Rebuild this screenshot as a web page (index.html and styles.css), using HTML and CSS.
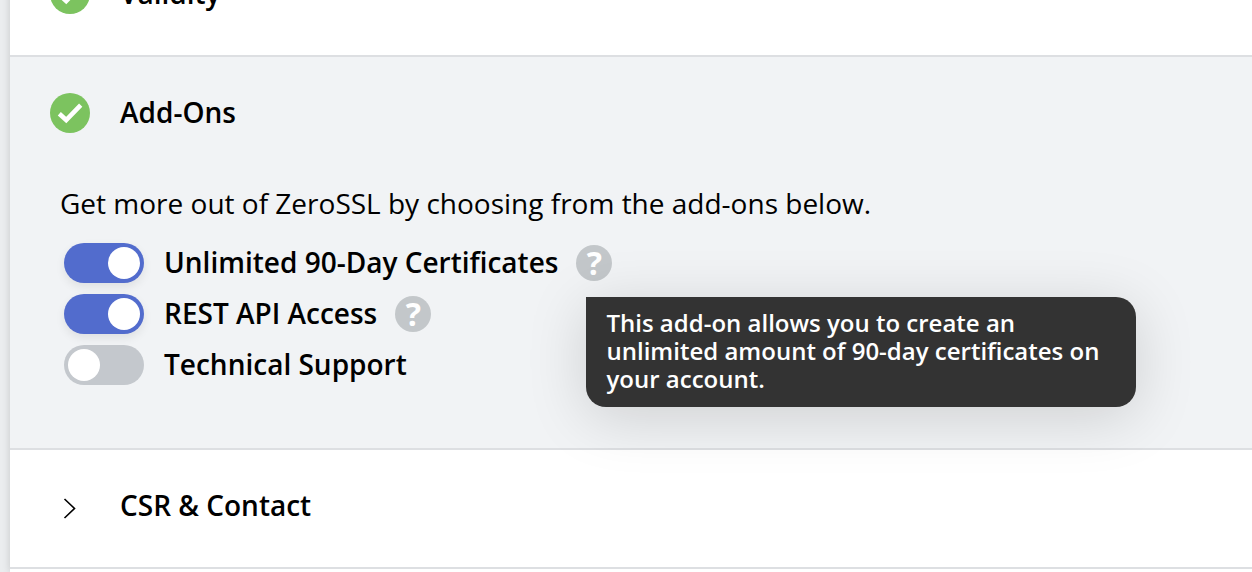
FILE: index.html
```html
<!DOCTYPE html>
<html lang="en">
<head>
  <meta charset="UTF-8">
  <title>New Certificate - ZeroSSL</title>
  <link rel="stylesheet" href="styles.css">
</head>
<body>

  <main class="steps">
    <section class="step">
      <button class="step-header" type="button">
        <svg class="step-icon" viewBox="0 0 40 40" aria-hidden="true">
          <circle cx="20" cy="20" r="20" fill="#7cc35f"/>
          <path d="M9.3 20.8L16.2 27L30.7 12.2" fill="none" stroke="#fff" stroke-width="4.6"/>
        </svg>
        <span>Validity</span>
      </button>
    </section>

    <section class="step active">
      <button class="step-header" type="button" aria-expanded="true">
        <svg class="step-icon" viewBox="0 0 40 40" aria-hidden="true">
          <circle cx="20" cy="20" r="20" fill="#7cc35f"/>
          <path d="M9.3 20.8L16.2 27L30.7 12.2" fill="none" stroke="#fff" stroke-width="4.6"/>
        </svg>
        <span>Add-Ons</span>
      </button>

      <div class="step-body">
        <p>Get more out of ZeroSSL by choosing from the add-ons below.</p>
        <ul class="addons">
          <li>
            <input id="unlimited" class="toggle" type="checkbox" checked>
            <label for="unlimited">Unlimited 90-Day Certificates</label>
            <div class="help-wrap">
              <button class="help" type="button" aria-describedby="unlimited-tip">?</button>
              <div id="unlimited-tip" class="tooltip" role="tooltip">This add-on allows you to create an unlimited amount of 90-day certificates on your account.</div>
            </div>
          </li>
          <li>
            <input id="api" class="toggle" type="checkbox" checked>
            <label for="api">REST API Access</label>
            <div class="help-wrap">
              <button class="help" type="button">?</button>
            </div>
          </li>
          <li>
            <input id="support" class="toggle" type="checkbox">
            <label for="support">Technical Support</label>
          </li>
        </ul>
      </div>
    </section>

    <section class="step">
      <button class="step-header" type="button" aria-expanded="false">
        <svg class="step-icon" viewBox="0 0 40 40" aria-hidden="true">
          <path d="M14.5 13L24.5 22.5L14.5 32" fill="none" stroke="#000" stroke-width="1.6"/>
        </svg>
        <span>CSR &amp; Contact</span>
      </button>
    </section>
  </main>

</body>
</html>
```
FILE: styles.css
```css
body {
  margin: 0;
  background: #ebedef;
  color: #000;
  font-family: "Open Sans", sans-serif;
  font-size: 28px;
  line-height: 38px;
}
button {
  border: 0;
  padding: 0;
  background: none;
  color: inherit;
  font: inherit;
  cursor: pointer;
}

/* Accordion */
.steps {
  margin: -62px 0 0 10px;
  padding-bottom: 3px;
  background: #fff;
  box-shadow: 0 0 8px rgba(0, 0, 0, 0.16);
}
.step {
  border-bottom: 2px solid #dddfe2;
}
.step.active {
  background: #f1f3f5;
}
.step-header {
  display: flex;
  align-items: center;
  gap: 30px;
  width: 100%;
  padding: 36px 40px 41px;
  font-weight: 600;
  text-align: left;
}
.step-header span,
.addons label {
  padding-bottom: 2px;
}
.step-icon {
  width: 40px;
  height: 40px;
  flex: none;
}
.step-body {
  padding: 10px 50px 63px;
}
.step-body p {
  margin: 0 0 21px;
}

/* Add-on switches */
.addons {
  display: flex;
  flex-direction: column;
  gap: 11px;
  list-style: none;
  margin: 0;
  padding: 0 4px;
}
.addons li {
  display: flex;
  align-items: center;
  height: 40px;
}
.addons label {
  margin: 0 18px 0 20px;
  font-weight: 600;
}
.toggle {
  appearance: none;
  flex: none;
  width: 80px;
  height: 40px;
  margin: 0;
  padding: 4px;
  box-sizing: border-box;
  border-radius: 20px;
  background: #c4c8cd;
  cursor: pointer;
}
.toggle::before {
  content: "";
  display: block;
  width: 32px;
  height: 32px;
  border-radius: 50%;
  background: #fff;
}
.toggle:checked {
  background: #526ccd;
  box-shadow: 0 4px 10px rgba(0, 0, 0, 0.08);
}
.toggle:checked::before {
  margin-left: auto;
}

/* Help bubble */
.help-wrap {
  position: relative;
  height: 36px;
}
.help {
  display: block;
  width: 36px;
  height: 36px;
  border-radius: 50%;
  background: #c3c7ca;
  color: #fff;
  font-size: 32px;
  font-weight: 700;
  line-height: 34px;
}
.tooltip {
  position: absolute;
  top: 52px;
  left: 10px;
  z-index: 1;
  box-sizing: border-box;
  width: 550px;
  padding: 12px 20px 14px;
  border-radius: 0 20px 20px 20px;
  background: #333;
  box-shadow: 0 10px 60px rgba(0, 0, 0, 0.15);
  color: #fff;
  font-size: 24px;
  font-weight: 600;
  line-height: 28px;
}
```
